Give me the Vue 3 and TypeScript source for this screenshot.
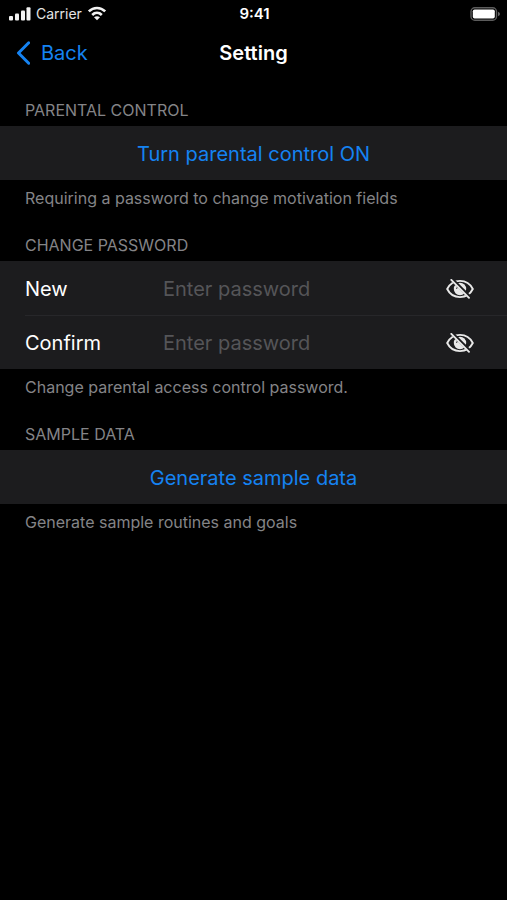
<script setup lang="ts">
import { reactive, ref } from 'vue'

interface PasswordField {
  id: string
  label: string
  value: string
  visible: boolean
}

const parentalControl = ref(false)
const fields = reactive<PasswordField[]>([
  { id: 'new-password', label: 'New', value: '', visible: false },
  { id: 'confirm-password', label: 'Confirm', value: '', visible: false },
])
</script>

<template>
  <div class="screen">
    <div class="status">
      <div class="carrier">
        <svg class="signal" viewBox="0 0 22 14" aria-hidden="true">
          <rect x="0" y="9" width="4" height="4.500" rx="1" />
          <rect x="6" y="6.500" width="4" height="7" rx="1" />
          <rect x="12" y="3.500" width="4" height="10" rx="1" />
          <rect x="17.500" y="0.300" width="4" height="13.200" rx="1" />
        </svg>
        <span>Carrier</span>
        <svg class="wifi" viewBox="0 0 20 15" aria-hidden="true">
          <path d="M1.800 5.400C6.500 0.800 13.500 0.800 18.200 5.400" />
          <path d="M5.200 9C8 6.200 12 6.200 14.800 9" />
          <path class="dot" d="M7 11.200Q10 9.200 13 11.200L10 14.200Z" />
        </svg>
      </div>
      <span class="time">9:41</span>
      <svg class="battery" viewBox="0 0 30 14" aria-hidden="true">
        <rect class="shell" x="1" y="0.800" width="25.500" height="12.400" rx="3.800" />
        <rect class="level" x="2.800" y="2.500" width="22" height="9" rx="1.800" />
        <path class="tip" d="M28 4.800Q30 5.600 30 7T28 9.200Z" />
      </svg>
    </div>

    <header class="nav">
      <button class="back" type="button">
        <svg viewBox="0 0 14 24" aria-hidden="true"><path d="M12.700 1.800L2.500 12L12.700 22.200" /></svg>
        <span>Back</span>
      </button>
      <h1>Setting</h1>
    </header>

    <main>
      <section>
        <h2>PARENTAL CONTROL</h2>
        <button class="row action" type="button" @click="parentalControl = !parentalControl">
          Turn parental control {{ parentalControl ? 'OFF' : 'ON' }}
        </button>
        <p>Requiring a password to change motivation fields</p>
      </section>

      <section>
        <h2>CHANGE PASSWORD</h2>
        <div class="group">
          <div v-for="field in fields" :key="field.id" class="row field">
            <label :for="field.id">{{ field.label }}</label>
            <input
              :id="field.id"
              v-model="field.value"
              :type="field.visible ? 'text' : 'password'"
              placeholder="Enter password"
              autocomplete="new-password"
            />
            <button class="eye" type="button" :aria-pressed="field.visible" @click="field.visible = !field.visible">
              <svg viewBox="0 0 28 20" aria-hidden="true">
                <path class="lid" d="M1.200 10C6.500 -0.800 21.500 -0.800 26.800 10C21.500 20.800 6.500 20.800 1.200 10Z" />
                <circle class="iris" cx="14" cy="10" r="6.200" />
                <path class="glint" d="M10.600 9.500Q11 7 13.500 6.600" />
                <g v-if="!field.visible">
                  <path class="gap" d="M6.500 0.800L24 18.300" />
                  <path class="slash" d="M5.300 0.900L23 18.800" />
                </g>
              </svg>
            </button>
          </div>
        </div>
        <p>Change parental access control password.</p>
      </section>

      <section>
        <h2>SAMPLE DATA</h2>
        <button class="row action" type="button">Generate sample data</button>
        <p>Generate sample routines and goals</p>
      </section>
    </main>
  </div>
</template>

<style>
body {
  margin: 0;
  background: #000;
}
</style>

<style scoped>
.screen {
  min-height: 100vh;
  background: #000;
  color: #fff;
  font-family: Inter, 'Liberation Sans', sans-serif;
  font-size: 20px;
}

button,
input {
  margin: 0;
  padding: 0;
  border: 0;
  background: none;
  color: inherit;
  font: inherit;
}

button {
  cursor: pointer;
}

svg {
  display: block;
  fill: none;
}

.status {
  display: grid;
  grid-template-columns: 1fr auto 1fr;
  align-items: center;
  height: 27px;
  padding: 0 7px 0 9px;
  font-size: 14px;
}

.carrier {
  display: flex;
  align-items: center;
  gap: 5px;
  color: #e4e4e4;
}

.signal {
  width: 22px;
  height: 14px;
  fill: #f2f2f2;
}

.wifi {
  width: 20px;
  height: 15px;
  stroke: #f2f2f2;
  stroke-width: 2.6;
}

.wifi .dot {
  fill: #f2f2f2;
  stroke: none;
}

.time {
  font-size: 15px;
  font-weight: 600;
}

.battery {
  justify-self: end;
  width: 30px;
  height: 14px;
}

.shell {
  stroke: #5c5c5c;
  stroke-width: 1.4;
}

.level {
  fill: #fff;
}

.tip {
  fill: #666;
}

.nav {
  display: grid;
  grid-template-columns: 1fr auto 1fr;
  align-items: center;
  height: 51px;
  padding: 0 16px;
}

.back {
  display: flex;
  align-items: center;
  gap: 11px;
  color: #1583f2;
}

.back svg {
  width: 14px;
  height: 24px;
  stroke: currentColor;
  stroke-width: 3;
  stroke-linecap: round;
  stroke-linejoin: round;
}

h1 {
  margin: 0;
  font-size: 20px;
  font-weight: 600;
}

main {
  display: flex;
  flex-direction: column;
  gap: 13px;
  padding-top: 16px;
}

h2,
p {
  margin: 0;
  padding: 0 25px;
  color: #848487;
  font-size: 16px;
  font-weight: 400;
}

h2 {
  line-height: 32px;
}

p {
  line-height: 36px;
}

.row {
  box-sizing: border-box;
  width: 100%;
  height: 54px;
  padding-top: 1px;
}

.action {
  display: block;
  background: #1c1c1e;
  color: #1583f2;
  text-align: center;
}

.group {
  padding-left: 25px;
  background: #1c1c1e;
}

.field {
  display: grid;
  grid-template-columns: 138px 1fr 28px;
  align-items: center;
  padding-right: 33px;
}

.field + .field {
  padding-top: 0;
  border-top: 1px solid #27272a;
}

.field input {
  min-width: 0;
  height: 44px;
  outline: none;
}

.field input::placeholder {
  color: #555558;
  opacity: 1;
}

.eye svg {
  width: 28px;
  height: 20px;
}

.lid {
  stroke: #e8e8e8;
  stroke-width: 1.9;
}

.iris {
  fill: #e8e8e8;
}

.glint {
  stroke: #1c1c1e;
  stroke-width: 1;
  stroke-linecap: round;
}

.gap {
  stroke: #1c1c1e;
  stroke-width: 3.4;
}

.slash {
  stroke: #e8e8e8;
  stroke-width: 1.9;
  stroke-linecap: round;
}
</style>
